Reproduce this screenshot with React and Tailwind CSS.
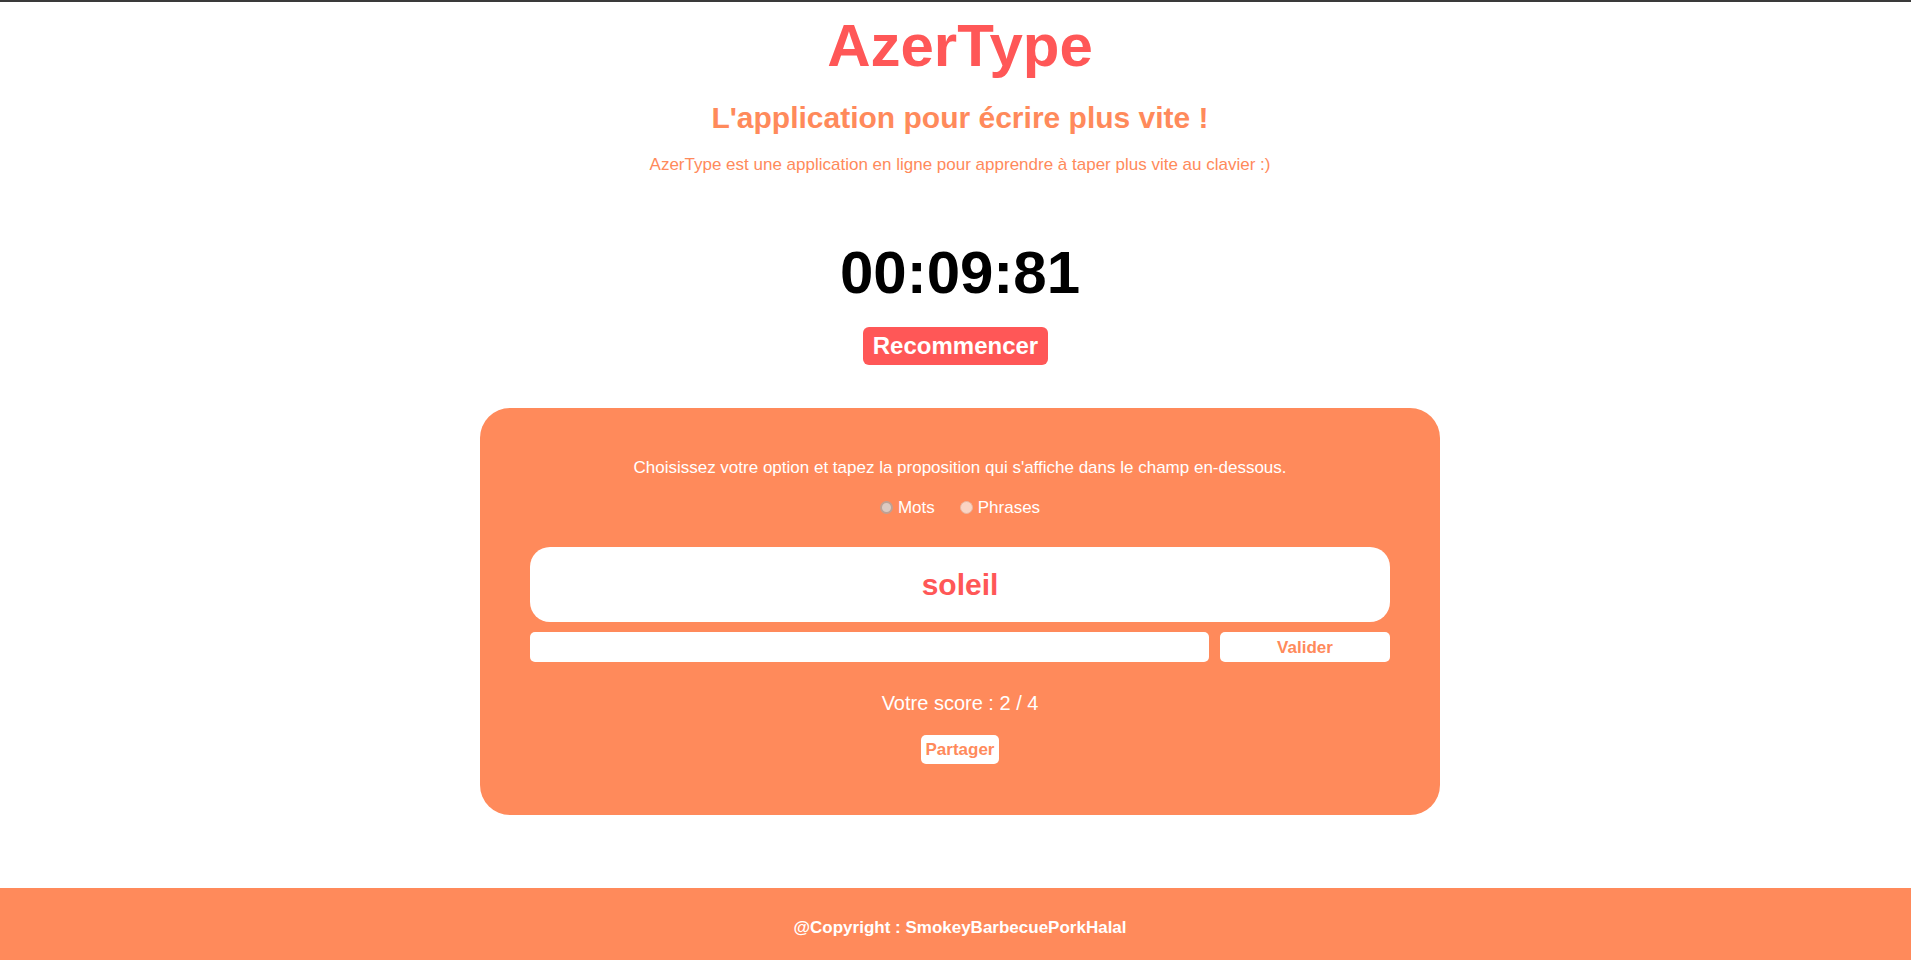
import { useState } from 'react'

function Radio({ checked, label, onChange }) {
  return (
    <label className="flex items-center cursor-pointer" onClick={onChange}>
      <span
        className={`w-[13px] h-[13px] mr-[5px] rounded-full ${
          checked ? 'border-2 border-[#bfa194] bg-[#dccac2]' : 'border border-[#e8b7a3] bg-[#fad4c4]'
        }`}
      />
      <span>{label}</span>
    </label>
  )
}

export default function App() {
  const [mode, setMode] = useState('mots')
  const [value, setValue] = useState('')

  return (
    <div className="min-h-screen flex flex-col bg-white font-['Liberation_Sans',Arial,sans-serif]">
      <div className="h-[2px] bg-[#3a3a3a]" />

      <main className="pl-[9px] flex flex-col items-center">
        <h1 className="mt-[14px] text-[60px] leading-none font-bold text-[#ff5757]">AzerType</h1>
        <h2 className="mt-[27px] text-[30px] leading-none font-bold text-[#ff8a5b]">
          L'application pour écrire plus vite !
        </h2>
        <p className="mt-[23px] text-[17px] leading-none text-[#ff8a5b]">
          AzerType est une application en ligne pour apprendre à taper plus vite au clavier :)
        </p>

        <div className="mt-[70px] text-[60px] leading-none font-bold text-black">00:09:81</div>

        <button className="mt-[24px] mr-[9px] pt-[7px] pb-[7px] px-[10px] rounded-[6px] bg-[#ff5757] text-white text-[24px] leading-none font-bold">
          Recommencer
        </button>

        <section className="mt-[43px] w-[960px] rounded-[30px] bg-[#ff8a5b] px-[50px] pt-[51px] pb-[51px] flex flex-col items-center text-white">
          <p className="text-[17px] leading-none">
            Choisissez votre option et tapez la proposition qui s'affiche dans le champ en-dessous.
          </p>

          <div className="mt-[23px] flex items-center gap-[25px] text-[17px] leading-none">
            <Radio checked={mode === 'mots'} label="Mots" onChange={() => setMode('mots')} />
            <Radio checked={mode === 'phrases'} label="Phrases" onChange={() => setMode('phrases')} />
          </div>

          <div className="mt-[31px] w-full h-[75px] rounded-[20px] bg-white flex items-center justify-center text-[30px] leading-none font-bold text-[#ff5757]">
            soleil
          </div>

          <div className="mt-[10px] w-full flex gap-[11px]">
            <input
              className="flex-1 h-[30px] rounded-[5px] bg-white outline-none px-2 text-[17px] text-black"
              value={value}
              onChange={(e) => setValue(e.target.value)}
            />
            <button className="w-[170px] h-[30px] rounded-[5px] bg-white text-[#ff8a5b] text-[17px] leading-none font-bold">
              Valider
            </button>
          </div>

          <p className="mt-[31px] text-[20px] leading-none">Votre score : 2 / 4</p>

          <button className="mt-[22px] py-[6px] px-[5px] rounded-[5px] bg-white text-[#ff8a5b] text-[17px] leading-none font-bold">
            Partager
          </button>
        </section>
      </main>

      <footer className="grow mt-[73px] pt-[30px] pb-[20px] pl-[9px] bg-[#ff8a5b] text-center text-white text-[17px] leading-[20px] font-bold">
        @Copyright : SmokeyBarbecuePorkHalal
      </footer>
    </div>
  )
}
